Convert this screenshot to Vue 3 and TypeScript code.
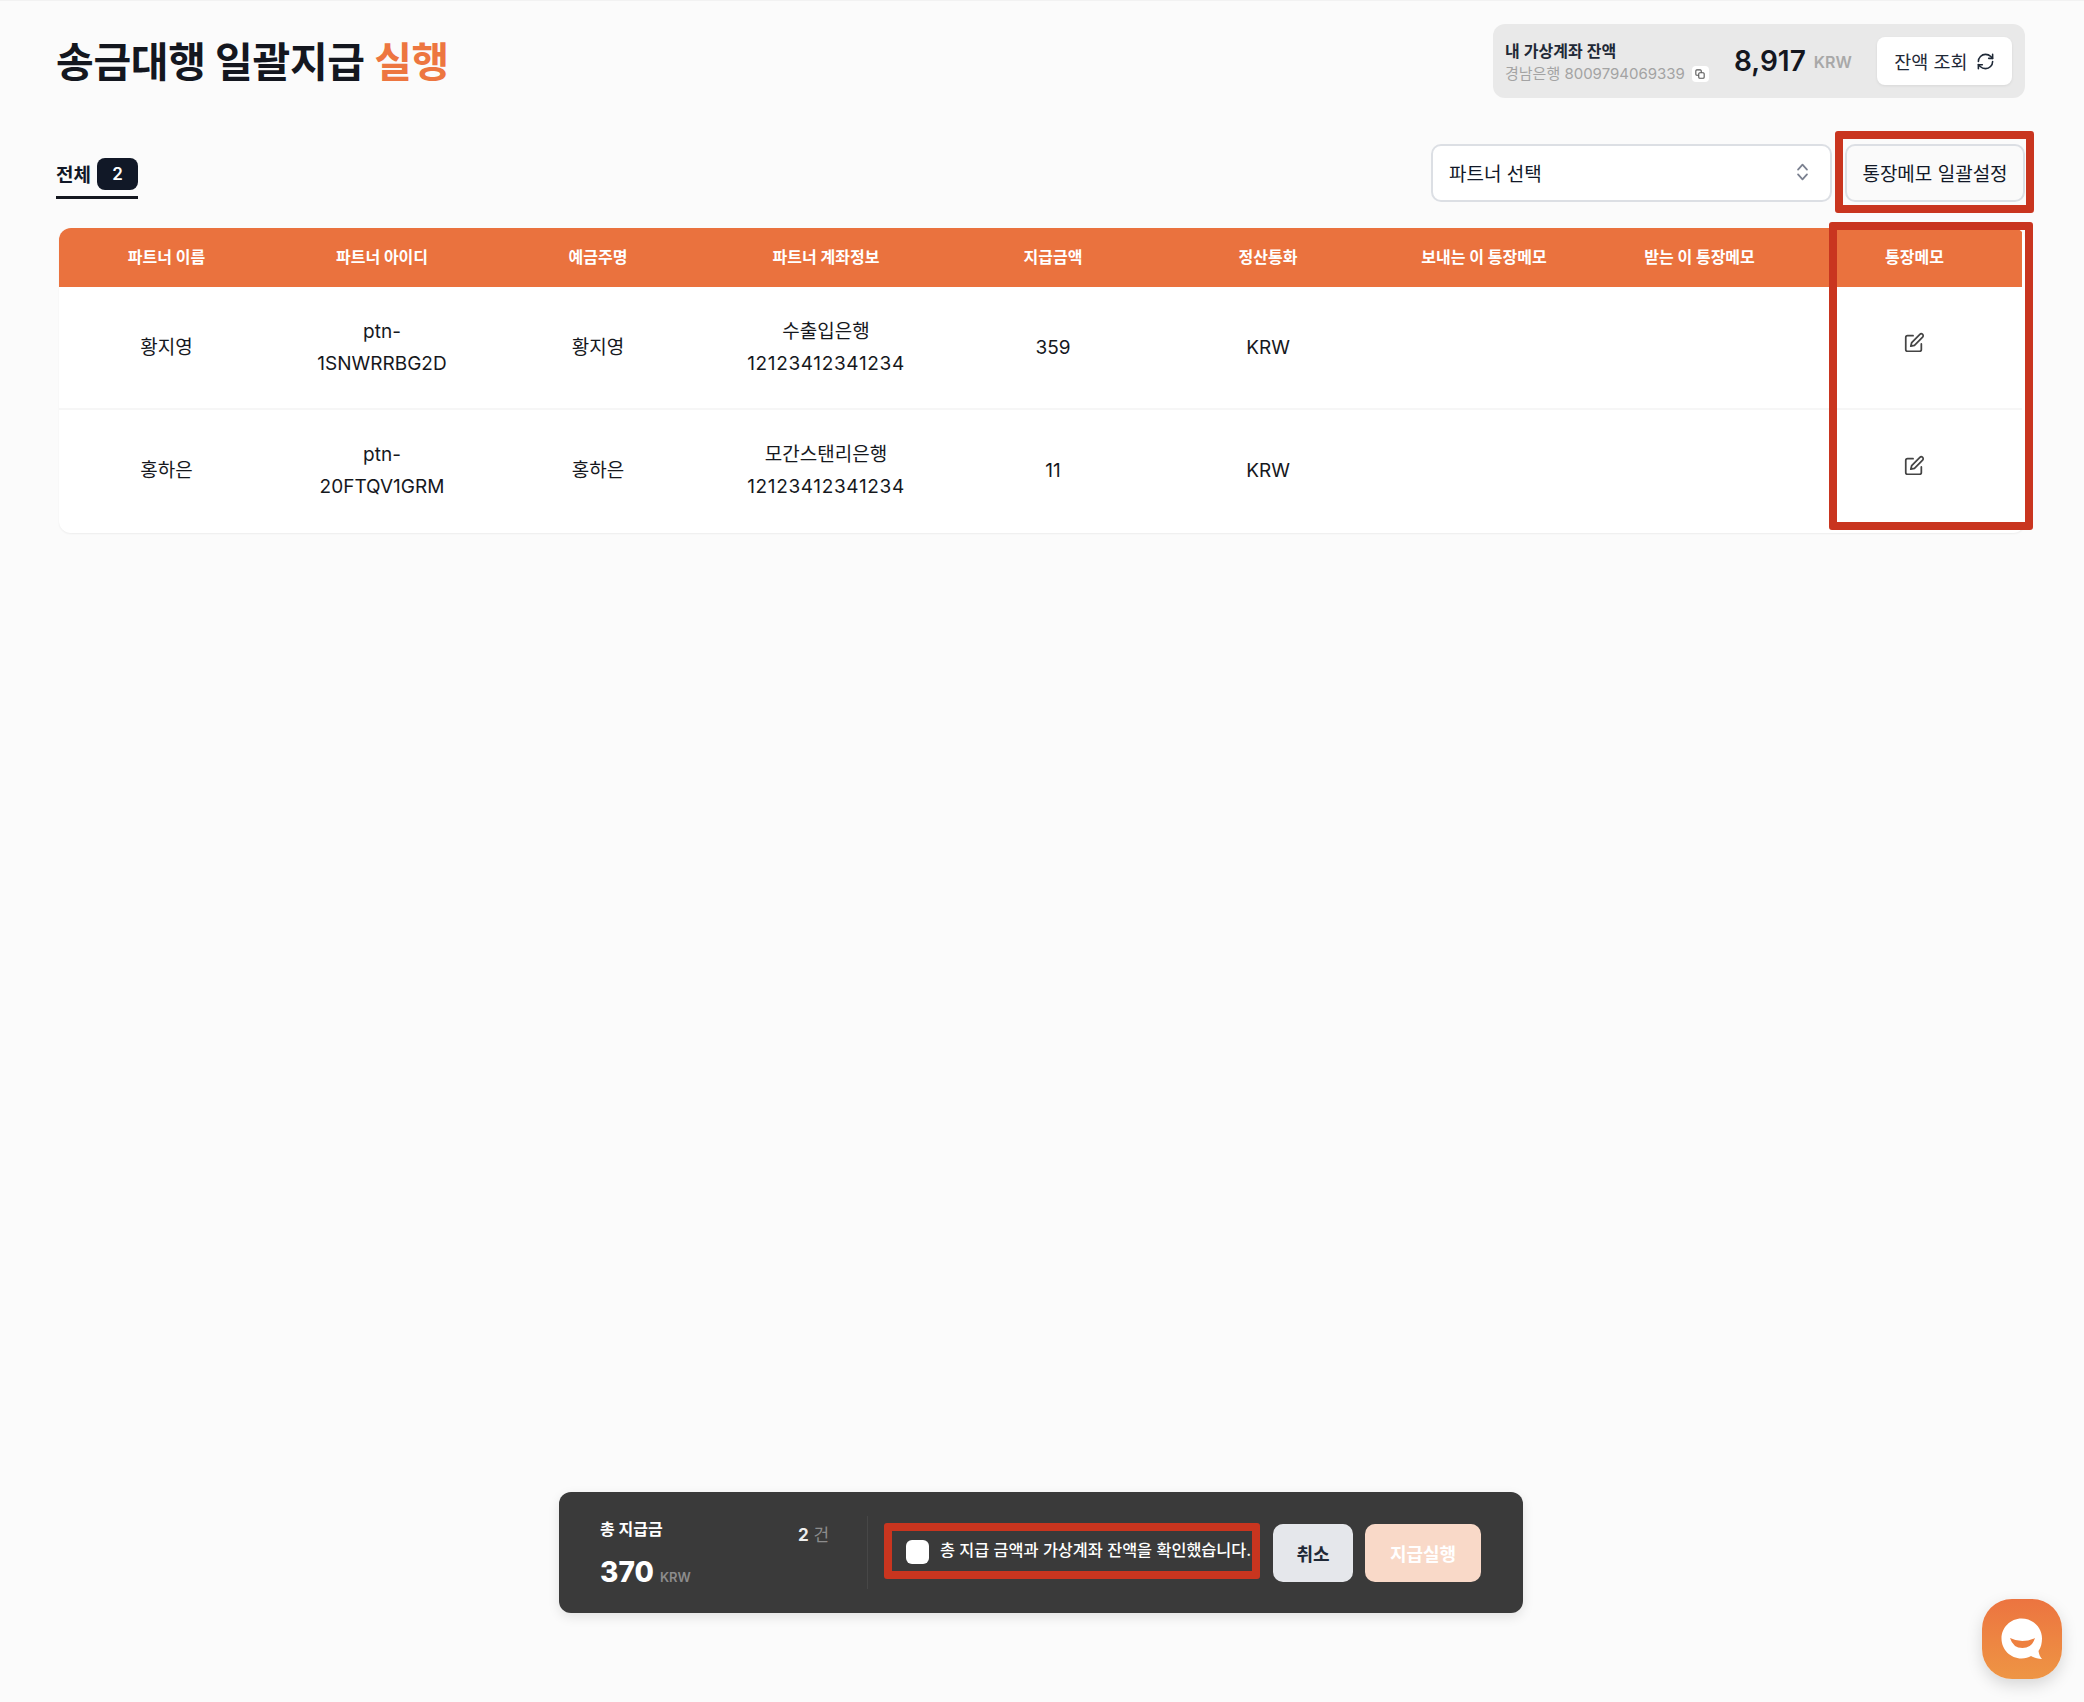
<template>
  <div class="page">
    <header class="top">
      <h1 class="title">송금대행 일괄지급 <span class="accent">실행</span></h1>
      <div class="balance">
        <div class="balance-info">
          <div class="balance-label">내 가상계좌 잔액</div>
          <div class="balance-account">
            경남은행 8009794069339
            <span class="copy-chip">
              <svg viewBox="0 0 12 12" width="10" height="10" fill="none" stroke="#555" stroke-width="1.3">
                <rect x="1" y="1" width="6.5" height="6.5" rx="1.2" />
                <rect x="4.5" y="4.5" width="6.5" height="6.5" rx="1.2" fill="#fff" />
              </svg>
            </span>
          </div>
        </div>
        <div class="balance-amount">8,917</div>
        <div class="balance-unit">KRW</div>
        <button class="refresh-btn" type="button">
          잔액 조회
          <svg viewBox="0 0 24 24" width="19" height="19" fill="none" stroke="#1f2937" stroke-width="2" stroke-linecap="round" stroke-linejoin="round">
            <path d="M3 12a9 9 0 0 1 9-9 9.75 9.75 0 0 1 6.74 2.74L21 8" />
            <path d="M21 3v5h-5" />
            <path d="M21 12a9 9 0 0 1-9 9 9.75 9.75 0 0 1-6.74-2.74L3 16" />
            <path d="M8 16H3v5" />
          </svg>
        </button>
      </div>
    </header>

    <div class="toolbar">
      <div class="tab">
        전체 <span class="tab-count">{{ rows.length }}</span>
      </div>
      <div class="toolbar-right">
        <div class="partner-select">
          <span>파트너 선택</span>
          <svg viewBox="0 0 16 24" width="13" height="20" fill="none" stroke="#7b8190" stroke-width="2.2" stroke-linecap="round" stroke-linejoin="round">
            <path d="M2.5 9l5.5-6 5.5 6" />
            <path d="M2.5 15l5.5 6 5.5-6" />
          </svg>
        </div>
        <button class="memo-all-btn" type="button">통장메모 일괄설정</button>
      </div>
    </div>

    <div class="table-card">
      <table class="pay-table">
        <colgroup>
          <col v-for="(w, i) in colWidths" :key="i" :style="{ width: w + 'px' }" />
        </colgroup>
        <thead>
          <tr>
            <th v-for="h in headers" :key="h">{{ h }}</th>
          </tr>
        </thead>
        <tbody>
          <tr v-for="row in rows" :key="row.id">
            <td>{{ row.name }}</td>
            <td>ptn-<br />{{ row.id }}</td>
            <td>{{ row.name }}</td>
            <td>{{ row.bank }}<br /><span class="account-no">{{ row.account }}</span></td>
            <td>{{ row.amount }}</td>
            <td>KRW</td>
            <td></td>
            <td></td>
            <td>
              <svg class="edit-icon" viewBox="0 0 24 24" fill="none" stroke="#444" stroke-width="1.9" stroke-linecap="round" stroke-linejoin="round">
                <path d="M11 4H5a2 2 0 0 0-2 2v13a2 2 0 0 0 2 2h13a2 2 0 0 0 2-2v-6" />
                <path d="M18.4 2.6a2.1 2.1 0 0 1 3 3L12.5 14.5 8.5 15.5l1-4z" />
              </svg>
            </td>
          </tr>
        </tbody>
      </table>
    </div>

    <div class="mark mark-btn"></div>
    <div class="mark mark-col"></div>

    <div class="paybar">
      <div class="paybar-total">
        <div class="paybar-label">총 지급금</div>
        <div class="paybar-sum">370 <span class="paybar-unit">KRW</span></div>
      </div>
      <div class="paybar-count"><b>2</b> 건</div>
      <div class="paybar-divider"></div>
      <label class="confirm">
        <span class="confirm-box"></span>
        <span class="confirm-text">총 지급 금액과 가상계좌 잔액을 확인했습니다.</span>
      </label>
      <button class="cancel-btn" type="button">취소</button>
      <button class="run-btn" type="button">지급실행</button>
    </div>

    <div class="chat-btn">
      <svg viewBox="0 0 42 42" width="42" height="42">
        <path d="M20.5 0.5C9.5 0.5 0.5 9.5 0.5 20.5s9 20 20 20c4 0 7-1 9.500-2.500 3 2 7 3 11 3-2-2-3-5-3.500-8 2.500-3.500 3.500-8 3.500-12.500 0-11-9-20-20.500-20z" fill="#fff" />
        <path d="M9 20Q21 26 34 20Q31 30 21.500 30Q12 30 9 20Z" fill="#ee8040" />
      </svg>
    </div>
  </div>
</template>

<script setup lang="ts">
interface PayRow {
  id: string
  name: string
  bank: string
  account: string
  amount: number
}

const headers = [
  '파트너 이름',
  '파트너 아이디',
  '예금주명',
  '파트너 계좌정보',
  '지급금액',
  '정산통화',
  '보내는 이 통장메모',
  '받는 이 통장메모',
  '통장메모',
]

const colWidths = [215, 216, 216, 240, 214, 216, 216, 215, 215]

const rows: PayRow[] = [
  { id: '1SNWRRBG2D', name: '황지영', bank: '수출입은행', account: '12123412341234', amount: 359 },
  { id: '20FTQV1GRM', name: '홍하은', bank: '모간스탠리은행', account: '12123412341234', amount: 11 },
]
</script>

<style>
html,
body {
  margin: 0;
  background: #fbfbfb;
}
</style>

<style scoped>
.page {
  position: relative;
  box-sizing: border-box;
  height: 1702px;
  padding: 1px 59px 0 56px;
  border-top: 1px solid #f2f2f2;
  font-family: Inter, "Noto Sans CJK KR", sans-serif;
  color: #111827;
}

.top {
  display: flex;
  justify-content: space-between;
  align-items: flex-start;
  padding-top: 22px;
}

.title {
  margin: 16px 0 0;
  font-size: 41px;
  line-height: 44px;
  font-weight: 700;
  letter-spacing: -0.3px;
  color: #14171f;
}

.accent {
  color: #ed7640;
}

.balance {
  display: flex;
  align-items: center;
  box-sizing: border-box;
  width: 532px;
  height: 74px;
  padding: 0 13px 0 12px;
  border-radius: 12px;
  background: #e9e9e9;
}

.balance-info {
  width: 229px;
  padding-top: 3px;
}

.balance-label {
  font-size: 16px;
  line-height: 20px;
  font-weight: 600;
  color: #1f2937;
}

.balance-account {
  display: flex;
  align-items: center;
  gap: 7px;
  margin-top: 3px;
  font-size: 15px;
  line-height: 20px;
  color: #a3a3a3;
}

.copy-chip {
  display: flex;
  align-items: center;
  justify-content: center;
  width: 17px;
  height: 16px;
  border-radius: 4px;
  background: #fff;
}

.balance-amount {
  font-size: 28px;
  font-weight: 600;
  color: #14171f;
}

.balance-unit {
  flex: 1;
  margin-left: 8px;
  padding-top: 2px;
  font-size: 16px;
  font-weight: 600;
  color: #a8a8a8;
}

.refresh-btn {
  display: flex;
  align-items: center;
  justify-content: center;
  gap: 8px;
  width: 135px;
  height: 48px;
  padding: 0;
  border: none;
  border-radius: 8px;
  background: #fff;
  box-shadow: 0 1px 3px rgba(0, 0, 0, 0.08);
  font-family: inherit;
  font-size: 18.500px;
  color: #1f2937;
}

.toolbar {
  display: flex;
  justify-content: space-between;
  align-items: flex-start;
  margin-top: 46px;
}

.tab {
  display: flex;
  align-items: center;
  gap: 6px;
  height: 37px;
  margin-top: 11px;
  padding-bottom: 4px;
  border-bottom: 3px solid #14171f;
  font-size: 19px;
  font-weight: 600;
}

.tab-count {
  display: flex;
  align-items: center;
  justify-content: center;
  width: 41px;
  height: 32px;
  border-radius: 8px;
  background: #111827;
  font-size: 17px;
  color: #fff;
}

.toolbar-right {
  display: flex;
  gap: 13px;
}

.partner-select {
  display: flex;
  align-items: center;
  justify-content: space-between;
  box-sizing: border-box;
  width: 401px;
  height: 58px;
  padding: 0 21px 2px 16px;
  border: 2px solid #dcdfe4;
  border-radius: 10px;
  background: #fff;
  font-size: 19px;
}

.memo-all-btn {
  box-sizing: border-box;
  width: 180px;
  height: 58px;
  padding: 0 0 2px;
  border: 2px solid #dcdfe4;
  border-radius: 10px;
  background: #fafafa;
  font-family: inherit;
  font-size: 19px;
  color: #111827;
}

.table-card {
  box-sizing: border-box;
  width: 1966px;
  height: 305px;
  margin: 26px 0 0 3px;
  border-radius: 12px;
  background: #fff;
  box-shadow: 0 1px 2px rgba(0, 0, 0, 0.06);
  overflow: hidden;
}

.pay-table {
  width: 1963px;
  table-layout: fixed;
  border-collapse: collapse;
}

.pay-table th {
  height: 55px;
  padding: 0 0 4px;
  background: #ea723e;
  font-size: 16px;
  font-weight: 700;
  color: #fff;
}

.pay-table td {
  height: 121px;
  padding: 0;
  border-bottom: 2px solid #f6f6f6;
  text-align: center;
  font-size: 19px;
  line-height: 32px;
  color: #16181d;
}

.account-no {
  letter-spacing: 0.65px;
}

.pay-table tbody tr:last-child td {
  border-bottom: none;
}

.edit-icon {
  display: block;
  width: 22px;
  height: 22px;
  margin: -10px auto 0;
  transform: translateX(-1px);
}

.mark {
  position: absolute;
  box-sizing: border-box;
  border: 8px solid #c9351f;
  border-radius: 3px;
  pointer-events: none;
}

.mark-btn {
  left: 1835px;
  top: 130px;
  width: 199px;
  height: 82px;
}

.mark-col {
  left: 1829px;
  top: 221px;
  width: 204px;
  height: 308px;
}

.paybar {
  position: absolute;
  left: 559px;
  top: 1491px;
  display: flex;
  align-items: center;
  box-sizing: border-box;
  width: 964px;
  height: 121px;
  padding-left: 41px;
  border-radius: 12px;
  background: #3a3a3a;
  box-shadow: 0 4px 12px rgba(0, 0, 0, 0.1);
}

.paybar-total {
  width: 198px;
  color: #fff;
  padding-top: 6px;
}

.paybar-label {
  font-size: 16px;
  line-height: 24px;
  font-weight: 700;
}

.paybar-sum {
  margin-top: 13px;
  font-size: 28px;
  line-height: 36px;
  font-weight: 800;
}

.paybar-unit {
  font-size: 13px;
  font-weight: 600;
  color: #8c8c8c;
}

.paybar-count {
  align-self: flex-start;
  width: 69px;
  margin-top: 31px;
  font-size: 17px;
  line-height: 24px;
  color: #8c8c8c;
}

.paybar-count b {
  color: #eee;
}

.paybar-divider {
  width: 1px;
  height: 73px;
  background: #474747;
}

.confirm {
  display: flex;
  align-items: center;
  gap: 11px;
  box-sizing: border-box;
  width: 376px;
  height: 56px;
  margin: 0 0 3px 16px;
  padding: 0 0 0 14px;
  border: 8px solid #c9351f;
  border-radius: 3px;
  font-size: 16.300px;
  font-weight: 500;
  color: #fff;
  white-space: nowrap;
}

.confirm-box {
  flex: none;
  width: 23px;
  height: 24px;
  margin-top: 2px;
  border-radius: 6px;
  background: #fff;
}

.confirm-text {
  padding-bottom: 4px;
}

.cancel-btn,
.run-btn {
  height: 58px;
  padding: 0;
  border: none;
  border-radius: 10px;
  font-family: inherit;
  font-size: 18px;
  font-weight: 600;
}

.cancel-btn {
  width: 80px;
  margin-left: 13px;
  background: #e5e7eb;
  color: #1f2937;
}

.run-btn {
  width: 116px;
  margin-left: 12px;
  background: #f9d9c8;
  color: #fff;
}

.chat-btn {
  position: absolute;
  left: 1982px;
  top: 1598px;
  display: flex;
  align-items: center;
  justify-content: center;
  width: 80px;
  height: 80px;
  border-radius: 30px;
  background: linear-gradient(180deg, #ec7440, #ee9544);
  box-shadow: 0 6px 16px rgba(0, 0, 0, 0.15);
}
</style>
